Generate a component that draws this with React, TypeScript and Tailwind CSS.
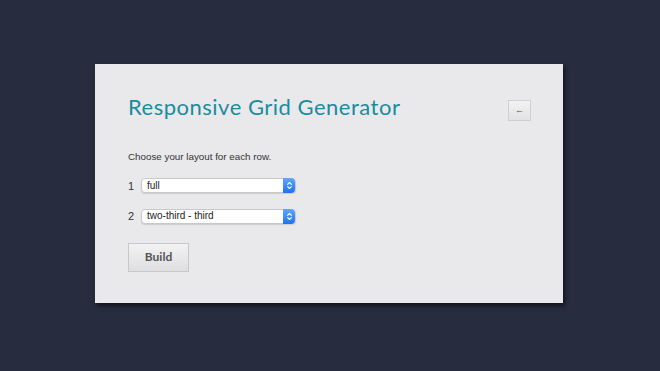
import { ChevronsUpDown } from "lucide-react";

const rows = [
  { n: 1, value: "full" },
  { n: 2, value: "two-third - third" },
];

function FakeSelect({ value }: { value: string }) {
  return (
    <div className="flex h-[15px] w-[155px] items-center rounded-[4px] border border-[#c9c9cc] bg-white shadow-[0_1px_1px_rgba(0,0,0,0.12)]">
      <span className="flex-1 pl-[5px] text-[10px] leading-none text-[#222]">{value}</span>
      <span className="flex h-[15px] w-[12px] items-center justify-center rounded-r-[4px] bg-gradient-to-b from-[#5ea8ff] to-[#1a73ee]">
        <ChevronsUpDown className="h-[9px] w-[9px] text-white" strokeWidth={3} />
      </span>
    </div>
  );
}

export default function App() {
  return (
    <div className="flex h-[371px] w-[660px] items-start bg-[#272c3f] pl-[95px] pt-[64px] font-['Liberation_Sans',sans-serif]">
      <div className="h-[239px] w-[468px] bg-[#e9e9eb] px-[33px] pt-[29px] shadow-[2px_3px_4px_rgba(0,0,0,0.55)]">
        <div className="flex items-start justify-between">
          <h1 className="font-['Lato',sans-serif] text-[22px] leading-[28px] tracking-[0.5px] text-[#1a8c9f]">
            Responsive Grid Generator
          </h1>
          <button className="mt-[7px] mr-[-1px] flex h-[21px] w-[23px] items-center justify-center border border-[#cfcfd2] bg-gradient-to-b from-[#f3f3f4] to-[#e2e2e4] text-[9px] text-[#555]">
            ←
          </button>
        </div>
        <p className="mt-[29px] text-[9.8px] text-[#333]">Choose your layout for each row.</p>
        <div className="mt-[13px] flex flex-col gap-[14px]">
          {rows.map((r) => (
            <div key={r.n} className="flex items-center gap-[8px]">
              <span className="w-[5px] text-[11px] text-[#333]">{r.n}</span>
              <FakeSelect value={r.value} />
            </div>
          ))}
        </div>
        <button className="mt-[18px] h-[29px] w-[61px] border border-[#c8c8cb] bg-gradient-to-b from-[#f2f2f3] to-[#dfdfe1] font-['Lato',sans-serif] text-[12px] font-bold text-[#555]">
          Build
        </button>
      </div>
    </div>
  );
}
